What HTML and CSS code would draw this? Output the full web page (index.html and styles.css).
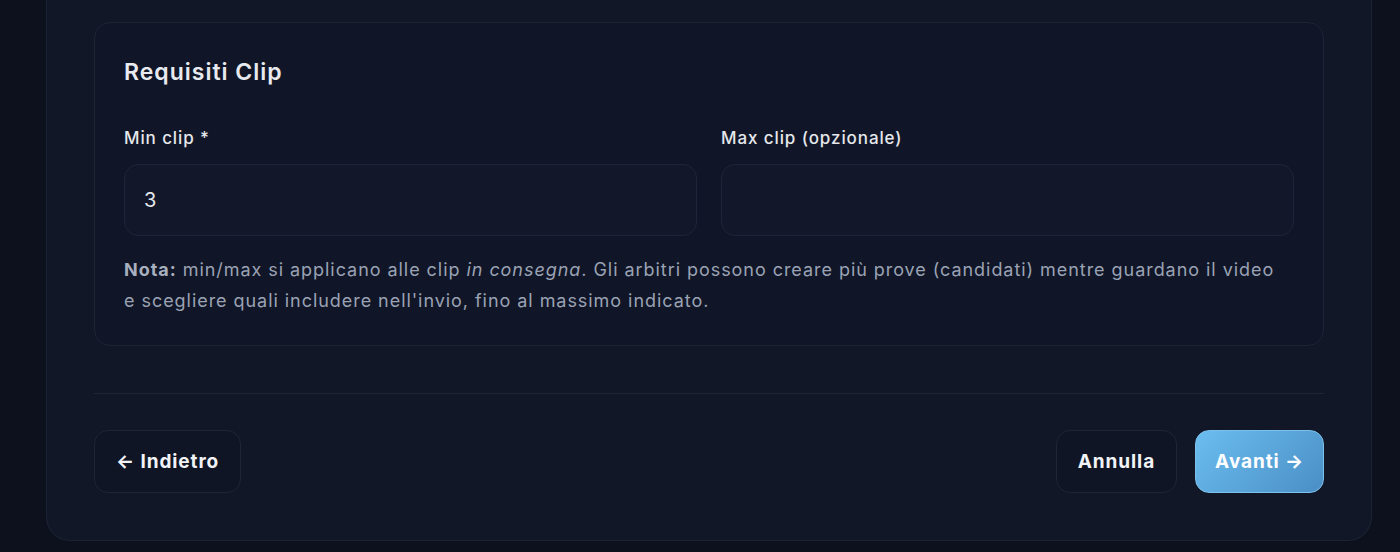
FILE: index.html
```html
<!DOCTYPE html>
<html lang="it">
<head>
    <meta charset="UTF-8">
    <title>Requisiti Clip</title>
    <link rel="stylesheet" href="styles.css">
</head>
<body>
    <div class="card">
        <!-- sezione requisiti -->
        <section class="box">
            <h2 class="box-title">Requisiti Clip</h2>
            <div class="fields">
                <label class="field">
                    <span class="field-label">Min clip *</span>
                    <input class="field-input" type="text" value="3">
                </label>
                <label class="field">
                    <span class="field-label">Max clip (opzionale)</span>
                    <input class="field-input" type="text" value="">
                </label>
            </div>
            <p class="note"><b>Nota:</b> min/max si applicano alle clip <i>in consegna</i>. Gli arbitri possono creare più prove (candidati) mentre guardano il video e scegliere quali includere nell'invio, fino al massimo indicato.</p>
        </section>

        <hr class="divider">

        <!-- bottoni -->
        <div class="actions">
            <button class="btn">← Indietro</button>
            <div class="actions-right">
                <button class="btn">Annulla</button>
                <button class="btn btn-primary">Avanti →</button>
            </div>
        </div>
    </div>
</body>
</html>
```

FILE: styles.css
```css
html,
body {
    margin: 0;
    padding: 0;
}

body {
    background: #0c111d;
    font-family: Inter, "Noto Sans", sans-serif;
    color: #e5e7eb;
    padding: 0 28px 0 46px;
    height: 552px;
    overflow: hidden;
}

/* card esterna */
.card {
    margin-top: -26px;
    background: #111726;
    border: 1px solid #1c2334;
    border-top: 0;
    border-radius: 0 0 24px 24px;
    padding: 48px 47px 47px;
}

/* box interno */
.box {
    border: 1px solid #1d2436;
    border-radius: 16px;
    background: #101627;
    padding: 35px 29px 29px;
}

.box-title {
    margin: 0;
    font-size: 23px;
    line-height: 28px;
    font-weight: 600;
    color: #e8eaf0;
    letter-spacing: 1px;
}

.fields {
    display: grid;
    grid-template-columns: 1fr 1fr;
    gap: 24px;
    margin-top: 40px;
}

.field {
    display: flex;
    flex-direction: column;
    gap: 14px;
}

.field-label {
    font-size: 17px;
    line-height: 24px;
    font-weight: 500;
    color: #e5e7eb;
    letter-spacing: 0.9px;
}

.field-input {
    box-sizing: border-box;
    height: 72px;
    border: 1px solid #1e2538;
    border-radius: 14px;
    background: #121829;
    padding: 0 19px;
    font-family: inherit;
    font-size: 20px;
    color: #e5e7eb;
    outline: none;
}

.note {
    margin: 18px 0 0;
    padding-right: 10px;
    font-size: 18px;
    line-height: 31px;
    color: #9aa2b4;
    letter-spacing: 0.95px;
}

.note b {
    font-weight: 700;
    color: #a8afbf;
}

.divider {
    border: 0;
    border-top: 1px solid #1e2536;
    margin: 47px 0 36px;
}

.actions {
    display: flex;
    justify-content: space-between;
    align-items: center;
}

.actions-right {
    display: flex;
    gap: 18px;
}

.btn {
    box-sizing: border-box;
    height: 63px;
    padding: 0 21px;
    border: 1px solid #1e2536;
    border-radius: 14px;
    background: #0f1524;
    color: #f1f3f7;
    font-family: inherit;
    font-size: 19px;
    font-weight: 700;
    letter-spacing: 0.9px;
}

.btn-primary {
    padding: 0 19px;
    background: linear-gradient(135deg, #6bbdf0, #4a8fc6);
    border-color: #7cc1ec;
    color: #ffffff;
}
```
